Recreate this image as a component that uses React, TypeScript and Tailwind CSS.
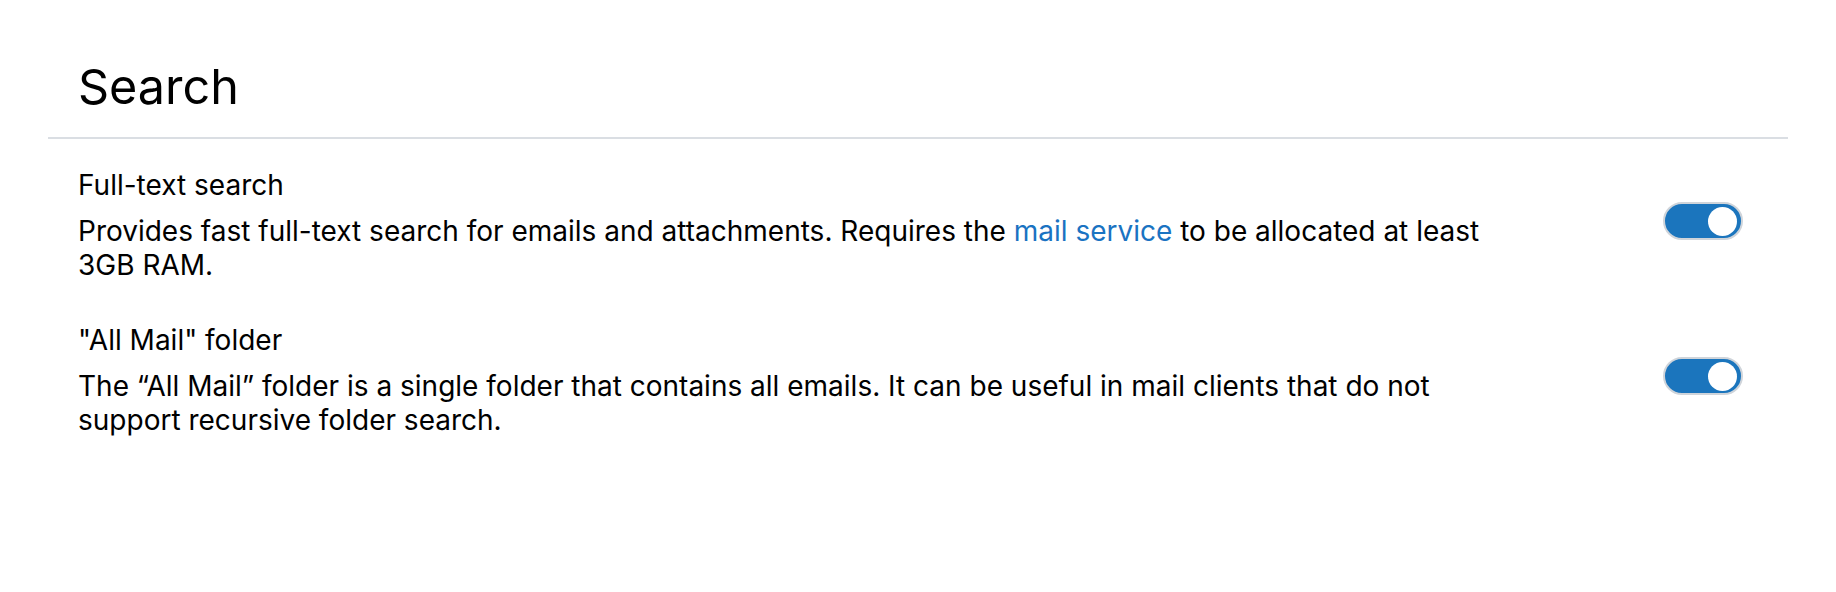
import React from "react";

function Toggle() {
  return (
    <div className="mt-[33px] flex h-[38px] w-[80px] shrink-0 items-center justify-end rounded-full border-2 border-[#cfd4da] bg-[#1b75bd] pr-[4px]">
      <div className="h-[29px] w-[29px] rounded-full bg-white" />
    </div>
  );
}

function Row({ title, children }: { title: string; children: React.ReactNode }) {
  return (
    <div className="flex items-start justify-between pl-[30px] pr-[45px]">
      <div className="max-w-[1440px]">
        <div className="text-[28px] leading-[32px] text-black">{title}</div>
        <div className="mt-[13px] text-[28px] leading-[34px] text-black">{children}</div>
      </div>
      <Toggle />
    </div>
  );
}

export default function App() {
  return (
    <div className="h-[592px] w-full bg-white px-[48px] font-['Inter',sans-serif]">
      <h1 className="px-[30px] pt-[63px] text-[48.5px] leading-[48px] text-black">Search</h1>
      <div className="mt-[26px] h-[2px] bg-[#dadee3]" />
      <div className="mt-[30px]">
        <Row title="Full-text search">
          Provides fast full-text search for emails and attachments. Requires the{" "}
          <a className="text-[#1a73c2]">mail service</a> to be allocated at least 3GB RAM.
        </Row>
      </div>
      <div className="mt-[42px]">
        <Row title={'"All Mail" folder'}>
          The “All Mail” folder is a single folder that contains all emails. It can be useful in mail
          clients that do not support recursive folder search.
        </Row>
      </div>
    </div>
  );
}
